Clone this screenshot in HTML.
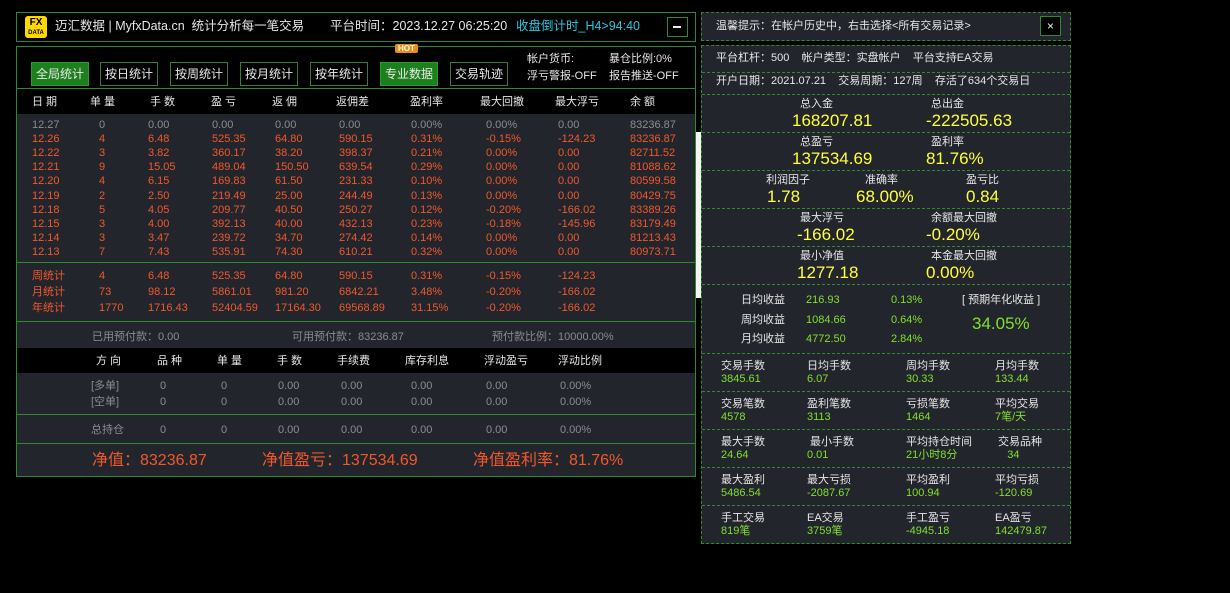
<!DOCTYPE html>
<html><head><meta charset="utf-8"><style>
*{margin:0;padding:0;box-sizing:border-box}
body{width:1230px;height:593px;background:#000;position:relative;overflow:hidden;font-family:"Liberation Sans","Noto Sans CJK SC",sans-serif;font-size:11px;color:#ddd}
.a{position:absolute;white-space:nowrap;line-height:14px}
.box{position:absolute;border:1px solid #2f8a2f}
.btn{position:absolute;top:62px;width:58px;height:24px;border:1px solid #3a7a3a;color:#e8e8e8;font-size:12px;text-align:center;line-height:22px}
.btn.on{background:#1d7f1d;border-color:#2a9a2a}
.o{color:#f0582a}.g{color:#8a8c90}.y{color:#ffff3c}.gr{color:#80e02a}.w{color:#e6e6e6}
.dl{position:absolute;left:702px;width:368px;border-top:1px dashed #2f8a2f}
.big{font-size:17px;line-height:20px}
</style></head><body>
<div class="box" style="left:16px;top:12px;width:680px;height:30px;background:#000"></div>
<div class="a" style="left:25px;top:16px;width:22px;height:22px;background:#ffd800;border-radius:3px;color:#000;font-weight:bold;font-size:10px;line-height:9px;text-align:center;padding-top:2px">FX<br><span style="font-size:6px">DATA</span></div>
<div class="a w" style="left:55px;top:19px;font-size:12.5px">迈汇数据 | MyfxData.cn&nbsp; 统计分析每一笔交易</div>
<div class="a w" style="left:330px;top:19px;font-size:12.5px">平台时间：2023.12.27 06:25:20</div>
<div class="a" style="left:516px;top:19px;font-size:12.5px;color:#27c8e0">收盘倒计时_H4&gt;94:40</div>
<div class="box" style="left:667px;top:17px;width:21px;height:20px"></div>
<div class="a" style="left:673px;top:26px;width:8px;height:2px;background:#eee"></div>
<div class="box" style="left:16px;top:46px;width:680px;height:431px;background:#000"></div>
<div class="a" style="left:17px;top:88px;width:678px;height:1px;background:#2f8a2f"></div>
<div class="btn on" style="left:31px">全局统计</div>
<div class="btn" style="left:100px">按日统计</div>
<div class="btn" style="left:170px">按周统计</div>
<div class="btn" style="left:240px">按月统计</div>
<div class="btn" style="left:310px">按年统计</div>
<div class="btn on" style="left:380px">专业数据</div>
<div class="btn" style="left:450px">交易轨迹</div>
<div class="a" style="left:395px;top:44px;background:#f08a10;color:#fff;font-size:8px;line-height:9px;padding:0 3px;border-radius:2px;font-weight:bold">HOT</div>
<div class="a w" style="left:527px;top:52px">帐户货币:</div>
<div class="a w" style="left:609px;top:52px">暴仓比例:0%</div>
<div class="a w" style="left:527px;top:69px">浮亏警报-OFF</div>
<div class="a w" style="left:609px;top:69px">报告推送-OFF</div>
<div class="a w" style="left:32px;top:95px;letter-spacing:3px">日期</div><div class="a w" style="left:90px;top:95px;letter-spacing:3px">单量</div><div class="a w" style="left:150px;top:95px;letter-spacing:3px">手数</div><div class="a w" style="left:211px;top:95px;letter-spacing:3px">盈亏</div><div class="a w" style="left:272px;top:95px;letter-spacing:3px">返佣</div><div class="a w" style="left:336px;top:95px">返佣差</div><div class="a w" style="left:410px;top:95px">盈利率</div><div class="a w" style="left:480px;top:95px">最大回撤</div><div class="a w" style="left:555px;top:95px">最大浮亏</div><div class="a w" style="left:630px;top:95px;letter-spacing:3px">余额</div>
<div class="a" style="left:17px;top:114px;width:678px;height:362px;background:#23252d"></div>
<div class="a" style="left:17px;top:262px;width:678px;height:1px;background:#2f8a2f"></div>
<div class="a" style="left:17px;top:321px;width:678px;height:1px;background:#2f8a2f"></div>
<div class="a" style="left:17px;top:348px;width:678px;height:25px;background:#000"></div>
<div class="a" style="left:17px;top:414px;width:678px;height:1px;background:#2f8a2f"></div>
<div class="a" style="left:17px;top:443px;width:678px;height:1px;background:#2f8a2f"></div>
<div id="rows"></div>
<div class="a g" style="left:92px;top:330px">已用预付款：0.00</div>
<div class="a g" style="left:292px;top:330px">可用预付款：83236.87</div>
<div class="a g" style="left:492px;top:330px">预付款比例：10000.00%</div>
<div class="a w" style="left:96px;top:354px;letter-spacing:3px">方向</div><div class="a w" style="left:157px;top:354px;letter-spacing:3px">品种</div><div class="a w" style="left:217px;top:354px;letter-spacing:3px">单量</div><div class="a w" style="left:277px;top:354px;letter-spacing:3px">手数</div><div class="a w" style="left:337px;top:354px">手续费</div><div class="a w" style="left:405px;top:354px">库存利息</div><div class="a w" style="left:484px;top:354px">浮动盈亏</div><div class="a w" style="left:558px;top:354px">浮动比例</div>
<div class="a" style="left:92px;top:452px;font-size:16px;line-height:18px;color:#f0582a">净值：83236.87</div>
<div class="a" style="left:262px;top:452px;font-size:16px;line-height:18px;color:#f0582a">净值盈亏：137534.69</div>
<div class="a" style="left:473px;top:452px;font-size:16px;line-height:18px;color:#f0582a">净值盈利率：81.76%</div>
<div class="a" style="left:696px;top:132px;width:5px;height:166px;background:#f4f4f4"></div>
<div class="a" style="left:701px;top:12px;width:370px;height:29px;border:1px dashed #2f8a2f;background:#23252d"></div>
<div class="a w" style="left:716px;top:19px">温馨提示：在帐户历史中，右击选择&lt;所有交易记录&gt;</div>
<div class="a" style="left:1040px;top:16px;width:21px;height:20px;border:1px solid #2f8a2f;background:#000;color:#eee;text-align:center;line-height:18px;font-size:12px">×</div>
<div class="a" style="left:701px;top:45px;width:370px;height:499px;border:1px dashed #2f8a2f;background:#23252d"></div>
<div id="right"></div>
<script>
var R=document.getElementById('rows'),h='';
function t(x,y,s,c,st){h+='<div class="a '+c+'" style="left:'+x+'px;top:'+(y-7)+'px;'+(st||'')+'">'+s+'</div>';}
var xs=[32,99,148,212,275,339,411,486,558,630];
var d=[["12.27","0","0.00","0.00","0.00","0.00","0.00%","0.00%","0.00","83236.87"],
["12.26","4","6.48","525.35","64.80","590.15","0.31%","-0.15%","-124.23","83236.87"],
["12.22","3","3.82","360.17","38.20","398.37","0.21%","0.00%","0.00","82711.52"],
["12.21","9","15.05","489.04","150.50","639.54","0.29%","0.00%","0.00","81088.62"],
["12.20","4","6.15","169.83","61.50","231.33","0.10%","0.00%","0.00","80599.58"],
["12.19","2","2.50","219.49","25.00","244.49","0.13%","0.00%","0.00","80429.75"],
["12.18","5","4.05","209.77","40.50","250.27","0.12%","-0.20%","-166.02","83389.26"],
["12.15","3","4.00","392.13","40.00","432.13","0.23%","-0.18%","-145.96","83179.49"],
["12.14","3","3.47","239.72","34.70","274.42","0.14%","0.00%","0.00","81213.43"],
["12.13","7","7.43","535.91","74.30","610.21","0.32%","0.00%","0.00","80973.71"]];
d.forEach(function(r,i){r.forEach(function(v,j){t(xs[j],125+i*14.1,v,i?'o':'g');});});
var s=[["周统计","4","6.48","525.35","64.80","590.15","0.31%","-0.15%","-124.23"],["月统计","73","98.12","5861.01","981.20","6842.21","3.48%","-0.20%","-166.02"],["年统计","1770","1716.43","52404.59","17164.30","69568.89","31.15%","-0.20%","-166.02"]];
s.forEach(function(r,i){r.forEach(function(v,j){t(xs[j],276+i*16,v,'o');});});
var px=[91,160,221,278,341,411,486,560];
[["[多单]",386],["[空单]",402],["总持仓",430]].forEach(function(r){var v=[r[0],"0","0","0.00","0.00","0.00","0.00","0.00%"];v.forEach(function(x,j){t(px[j],r[1],x,'g');});});
R.innerHTML=h;h='';
[72,94,132,170,208,246,284,353,391,429,467,505].forEach(function(y){h+='<div class="dl" style="top:'+y+'px"></div>';});
t(716,58,'平台杠杆：500 &nbsp;&nbsp; 帐户类型：实盘帐户 &nbsp;&nbsp; 平台支持EA交易','w');
t(716,81,'开户日期：2021.07.21 &nbsp;&nbsp; 交易周期：127周 &nbsp;&nbsp; 存活了634个交易日','w');
function p(x,y,l,vx,v){t(x,y,l,'w');h+='<div class="a y big" style="left:'+vx+'px;top:'+(y+7)+'px">'+v+'</div>';}
p(800,104,'总入金',792,'168207.81');p(931,104,'总出金',926,'-222505.63');
p(800,142,'总盈亏',792,'137534.69');p(931,142,'盈利率',926,'81.76%');
p(766,180,'利润因子',767,'1.78');p(865,180,'准确率',856,'68.00%');p(966,180,'盈亏比',966,'0.84');
p(800,218,'最大浮亏',797,'-166.02');p(931,218,'余额最大回撤',926,'-0.20%');
p(800,256,'最小净值',797,'1277.18');p(931,256,'本金最大回撤',926,'0.00%');
[["日均收益","216.93","0.13%"],["周均收益","1084.66","0.64%"],["月均收益","4772.50","2.84%"]].forEach(function(r,i){var y=300+i*19.5;t(741,y,r[0],'w');t(806,y,r[1],'gr');t(891,y,r[2],'gr');});
t(962,300,'[ 预期年化收益 ]','w');
h+='<div class="a gr big" style="left:972px;top:314px">34.05%</div>';
var gx=[721,807,906,995];
var G=[[["交易手数","3845.61"],["日均手数","6.07"],["周均手数","30.33"],["月均手数","133.44"]],
[["交易笔数","4578"],["盈利笔数","3113"],["亏损笔数","1464"],["平均交易","7笔/天"]],
[["最大手数","24.64"],[" 最小手数","0.01"],["平均持仓时间","21小时8分"],[" 交易品种","&nbsp;&nbsp;&nbsp;&nbsp;34"]],
[["最大盈利","5486.54"],["最大亏损","-2087.67"],["平均盈利","100.94"],["平均亏损","-120.69"]],
[["手工交易","819笔"],["EA交易","3759笔"],["手工盈亏","-4945.18"],["EA盈亏","142479.87"]]];
G.forEach(function(r,i){var y=366+i*38;r.forEach(function(c,j){t(gx[j],y,c[0],'w','white-space:pre');t(gx[j],y+13,c[1],'gr');});});
document.getElementById('right').innerHTML=h;
</script>
</body></html>
